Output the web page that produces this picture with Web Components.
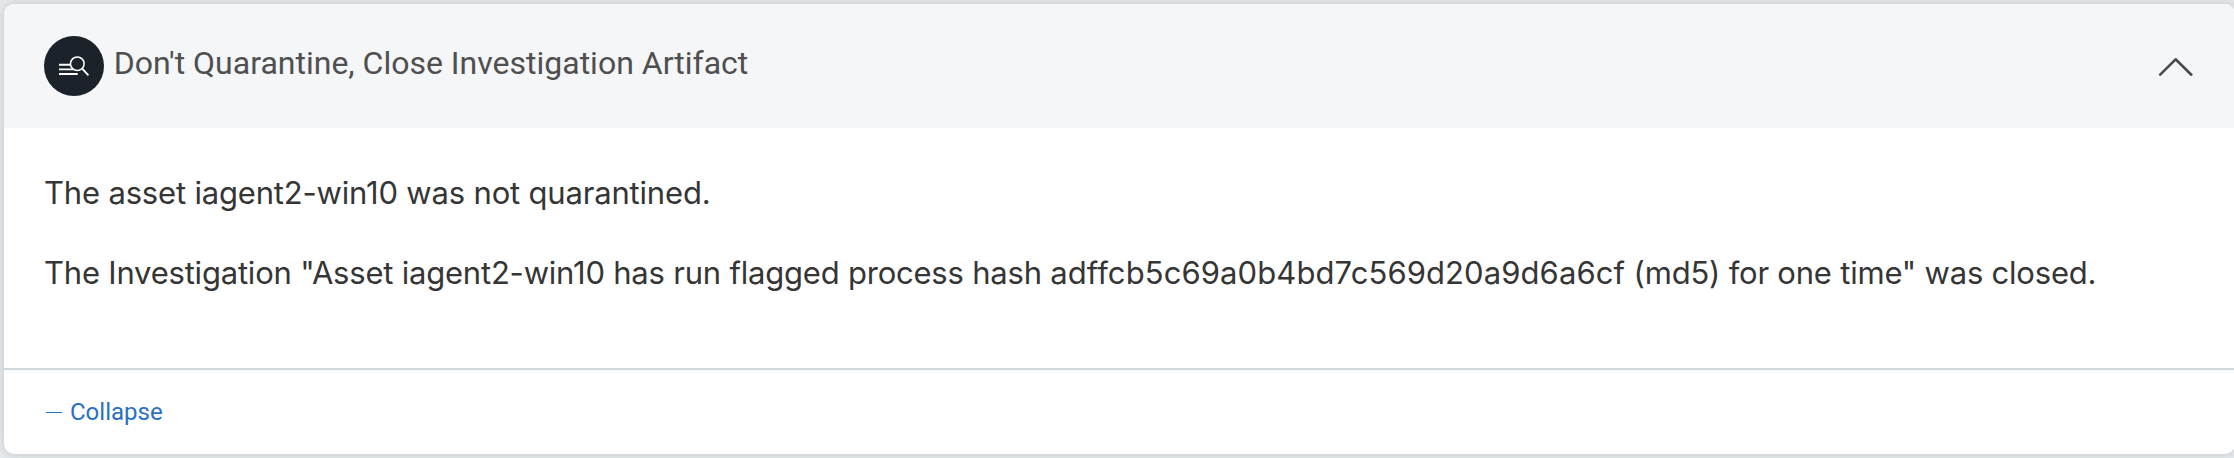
<!DOCTYPE html>
<html lang="en">
<head>
<meta charset="utf-8">
<title>Investigation Artifact</title>
<style>
html,body{margin:0;height:100%;overflow:hidden}
body{background:#e6eaed;font-family:Roboto,"Liberation Sans",sans-serif}
.hash{letter-spacing:.09px}
</style>
</head>
<body>
<artifact-card>
  <card-header slot="header">Don't Quarantine, Close Investigation Artifact</card-header>
  <card-message style="--track:-.18px">The asset iagent2-win10 was not quarantined.</card-message>
  <card-message>The Investigation "Asset iagent2-win10 has run flagged process hash <span class="hash">adffcb5c69a0b4bd7c569d20a9d6a6cf</span> (md5) for one time" was closed.</card-message>
  <collapse-link slot="footer">Collapse</collapse-link>
</artifact-card>
<script>
function define(name, html) {
  const template = document.createElement('template');
  template.innerHTML = html;
  customElements.define(name, class extends HTMLElement {
    constructor() {
      super();
      this.attachShadow({ mode: 'open' }).append(template.content.cloneNode(true));
    }
  });
}

define('artifact-icon', `
<style>
:host{display:block;flex:none;width:60px;height:60px}
svg{display:block}
</style>
<svg width="60" height="60" viewBox="0 0 60 60" fill="none" stroke="#fff">
  <circle cx="30" cy="30" r="30" fill="#1b222a" stroke="none"/>
  <path d="M15 28.8H27M15 33.4H29M15 38H33.7" stroke-width="1.9"/>
  <circle cx="33.3" cy="27.7" r="6.8" fill="#1b222a" stroke-width="1.5"/>
  <path d="M38.2 32.6L44.4 39.3" stroke-width="1.9"/>
</svg>`);

define('card-header', `
<style>
:host{display:flex;align-items:flex-start;box-sizing:border-box;height:124px;padding:32px 42px 0 40px;background:#f4f6f8;color:#4f4f4f}
.title{flex:1;margin:5px 0 0 9.8px;font-size:32px;line-height:44px;white-space:nowrap}
.chevron{display:block;flex:none;margin-top:20px}
</style>
<artifact-icon></artifact-icon>
<div class="title"><slot></slot></div>
<svg class="chevron" width="36" height="22" viewBox="0 0 36 22" fill="none" stroke="#4a4a4c" stroke-width="2.6" stroke-linecap="round" stroke-linejoin="round">
  <path d="M3.2 18.7L18.6 3.3L34.3 18.7"/>
</svg>`);

define('card-message', `
<style>
:host{display:block;font:400 31px/40px Inter,"Liberation Sans",sans-serif;color:#353535;white-space:nowrap;letter-spacing:var(--track,-.21px)}
</style>
<slot></slot>`);

define('collapse-link', `
<style>
:host{display:flex;align-items:center;height:84px;padding-left:42px;color:#2970c4;font-size:24px;line-height:32px}
i{width:16px;height:1px;margin:1px 8px 0 0;background:#2176c7}
</style>
<i></i><span><slot></slot></span>`);

define('artifact-card', `
<style>
:host{display:flex;flex-direction:column;box-sizing:border-box;width:2231px;height:450px;margin:4px 0 0 4px;border-radius:10px;background:#fff;box-shadow:0 0 10px rgba(70,75,80,.24)}
header{overflow:hidden;border-radius:10px 10px 0 0}
main{display:flex;flex:1;flex-direction:column;gap:40px;padding:45px 40px 0}
footer{border-top:2px solid #d2d7dc}
</style>
<header><slot name="header"></slot></header>
<main><slot></slot></main>
<footer><slot name="footer"></slot></footer>`);
</script>
</body>
</html>
